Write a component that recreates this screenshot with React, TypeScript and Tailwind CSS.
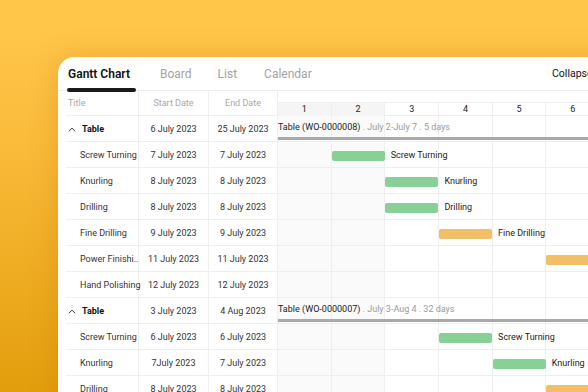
import React from 'react';

type Row =
  | { kind: 'group'; title: string; start: string; end: string; code: string; meta: string }
  | { kind: 'task'; title: string; start: string; end: string; col?: number; color?: 'green' | 'orange' };

const rows: Row[] = [
  { kind: 'group', title: 'Table', start: '6 July 2023', end: '25 July 2023', code: 'Table (WO-0000008)', meta: 'July 2-July 7 . 5 days' },
  { kind: 'task', title: 'Screw Turning', start: '7 July 2023', end: '7 July 2023', col: 2, color: 'green' },
  { kind: 'task', title: 'Knurling', start: '8 July 2023', end: '8 July 2023', col: 3, color: 'green' },
  { kind: 'task', title: 'Drilling', start: '8 July 2023', end: '8 July 2023', col: 3, color: 'green' },
  { kind: 'task', title: 'Fine Drilling', start: '9 July 2023', end: '9 July 2023', col: 4, color: 'orange' },
  { kind: 'task', title: 'Power Finishi..', start: '11 July 2023', end: '11 July 2023', col: 6, color: 'orange' },
  { kind: 'task', title: 'Hand Polishing', start: '12 July 2023', end: '12 July 2023' },
  { kind: 'group', title: 'Table', start: '3 July 2023', end: '4 Aug 2023', code: 'Table (WO-0000007)', meta: 'July 3-Aug 4 . 32 days' },
  { kind: 'task', title: 'Screw Turning', start: '6 July 2023', end: '6 July 2023', col: 4, color: 'green' },
  { kind: 'task', title: 'Knurling', start: '7July 2023', end: '7 July 2023', col: 5, color: 'green' },
  { kind: 'task', title: 'Drilling', start: '8 July 2023', end: '8 July 2023', col: 6, color: 'orange' },
];

const cols = [1, 2, 3, 4, 5, 6, 7];
const colStart = ['', 'col-start-1', 'col-start-2', 'col-start-3', 'col-start-4', 'col-start-5', 'col-start-6', 'col-start-7'];

const Chevron = () => (
  <svg width="8" height="5" viewBox="0 0 8 5" className="mr-[6px]">
    <path d="M0.8 4.3 L4 1.1 L7.2 4.3" fill="none" stroke="#333" strokeWidth="1" />
  </svg>
);

const GridCells = () => (
  <>
    {cols.map((c) => (
      <div
        key={c}
        className={`${colStart[c]} row-start-1 border-r border-[#efefef] ${c <= 2 ? 'bg-[#fafafa]' : ''}`}
      />
    ))}
  </>
);

export default function App() {
  return (
    <div
      className="w-[588px] h-[392px] overflow-hidden pt-[57px] pl-[58px] bg-[linear-gradient(180deg,#FFC64A_8%,#F9BA38_40%,#E39E0C_100%)]"
      style={{ fontFamily: 'Roboto, "Liberation Sans", sans-serif' }}
    >
      <div className="w-[620px] h-[400px] bg-white rounded-tl-[16px] shadow-[0_0_28px_rgba(190,110,0,0.3)]">
        {/* Tabs */}
        <div className="relative flex items-center h-[34px] pl-[10px] pr-[66px] border-b border-[#eeeeee]">
          <span className="text-[12px] font-semibold text-[#111]">Gantt Chart</span>
          <span className="ml-[30px] text-[12px] text-[#a3a3a3]">Board</span>
          <span className="ml-[26px] text-[12px] text-[#a3a3a3]">List</span>
          <span className="ml-[27px] text-[12px] text-[#a3a3a3]">Calendar</span>
          <span className="ml-auto w-[60px] text-[10.5px] text-[#111]">Collapse</span>
          <div className="absolute left-[9px] -bottom-[2px] w-[69px] h-[4px] rounded-full bg-[#1a1a1a]" />
        </div>

        <div className="flex pl-[8px] text-[9px] text-[#333]">
          {/* Left table */}
          <div className="w-[211px] shrink-0">
            <div className="flex h-[25px] border-b border-[#efefef] text-[#a8a8a8]">
              <div className="w-[73px] flex items-center pl-[2px] pt-[2px] border-r border-[#efefef]">Title</div>
              <div className="w-[70px] flex items-center justify-center pt-[2px] border-r border-[#efefef]">Start Date</div>
              <div className="w-[68px] flex items-center justify-center pt-[2px]">End Date</div>
            </div>
            {rows.map((r, i) => (
              <div key={i} className="flex h-[26px] border-b border-[#efefef]">
                <div className="w-[73px] flex items-center pl-[2px] pt-[2px] border-r border-[#efefef] whitespace-nowrap">
                  {r.kind === 'group' ? (
                    <>
                      <Chevron />
                      <span className="font-bold text-[#111]">{r.title}</span>
                    </>
                  ) : (
                    <span className="pl-[12px]">{r.title}</span>
                  )}
                </div>
                <div className="w-[70px] flex items-center justify-center pt-[2px] border-r border-[#efefef] whitespace-nowrap">{r.start}</div>
                <div className="w-[68px] flex items-center justify-center pt-[2px] whitespace-nowrap">{r.end}</div>
              </div>
            ))}
          </div>

          {/* Gantt */}
          <div className="border-l border-[#efefef]">
            <div className="h-[12px] border-b border-[#efefef]" />
            <div className="grid grid-cols-[repeat(7,53.7px)] h-[13px] border-b border-[#efefef]">
              {cols.map((c) => (
                <div
                  key={c}
                  className={`flex items-center justify-center border-r border-[#efefef] text-[#222] ${c <= 2 ? 'bg-[#f5f5f5]' : ''}`}
                >
                  {c}
                </div>
              ))}
            </div>
            {rows.map((r, i) => (
              <div key={i} className="grid grid-cols-[repeat(7,53.7px)] h-[26px] border-b border-[#efefef]">
                <GridCells />
                {r.kind === 'group' ? (
                  <div className="col-start-1 col-span-7 row-start-1 flex flex-col pt-[5px]">
                    <div className="whitespace-nowrap leading-[12px] text-[9px]">
                      <span className="text-[#222]">{r.code}</span>
                      <span className="text-[#9a9a9a]"> .  {r.meta}</span>
                    </div>
                    <div className="mt-[4px] h-[2.5px] bg-[#a9a9a9]" />
                  </div>
                ) : r.col ? (
                  <div className={`${colStart[r.col]} col-span-2 row-start-1 flex items-center pt-[2px] whitespace-nowrap`}>
                    <div
                      className={`w-[53px] h-[10px] rounded-[2px] shrink-0 ${r.color === 'green' ? 'bg-[#87D196]' : 'bg-[#F2BF67]'}`}
                    />
                    <span className="ml-[6px] text-[#222]">{r.title}</span>
                  </div>
                ) : null}
              </div>
            ))}
          </div>
        </div>
      </div>
    </div>
  );
}
